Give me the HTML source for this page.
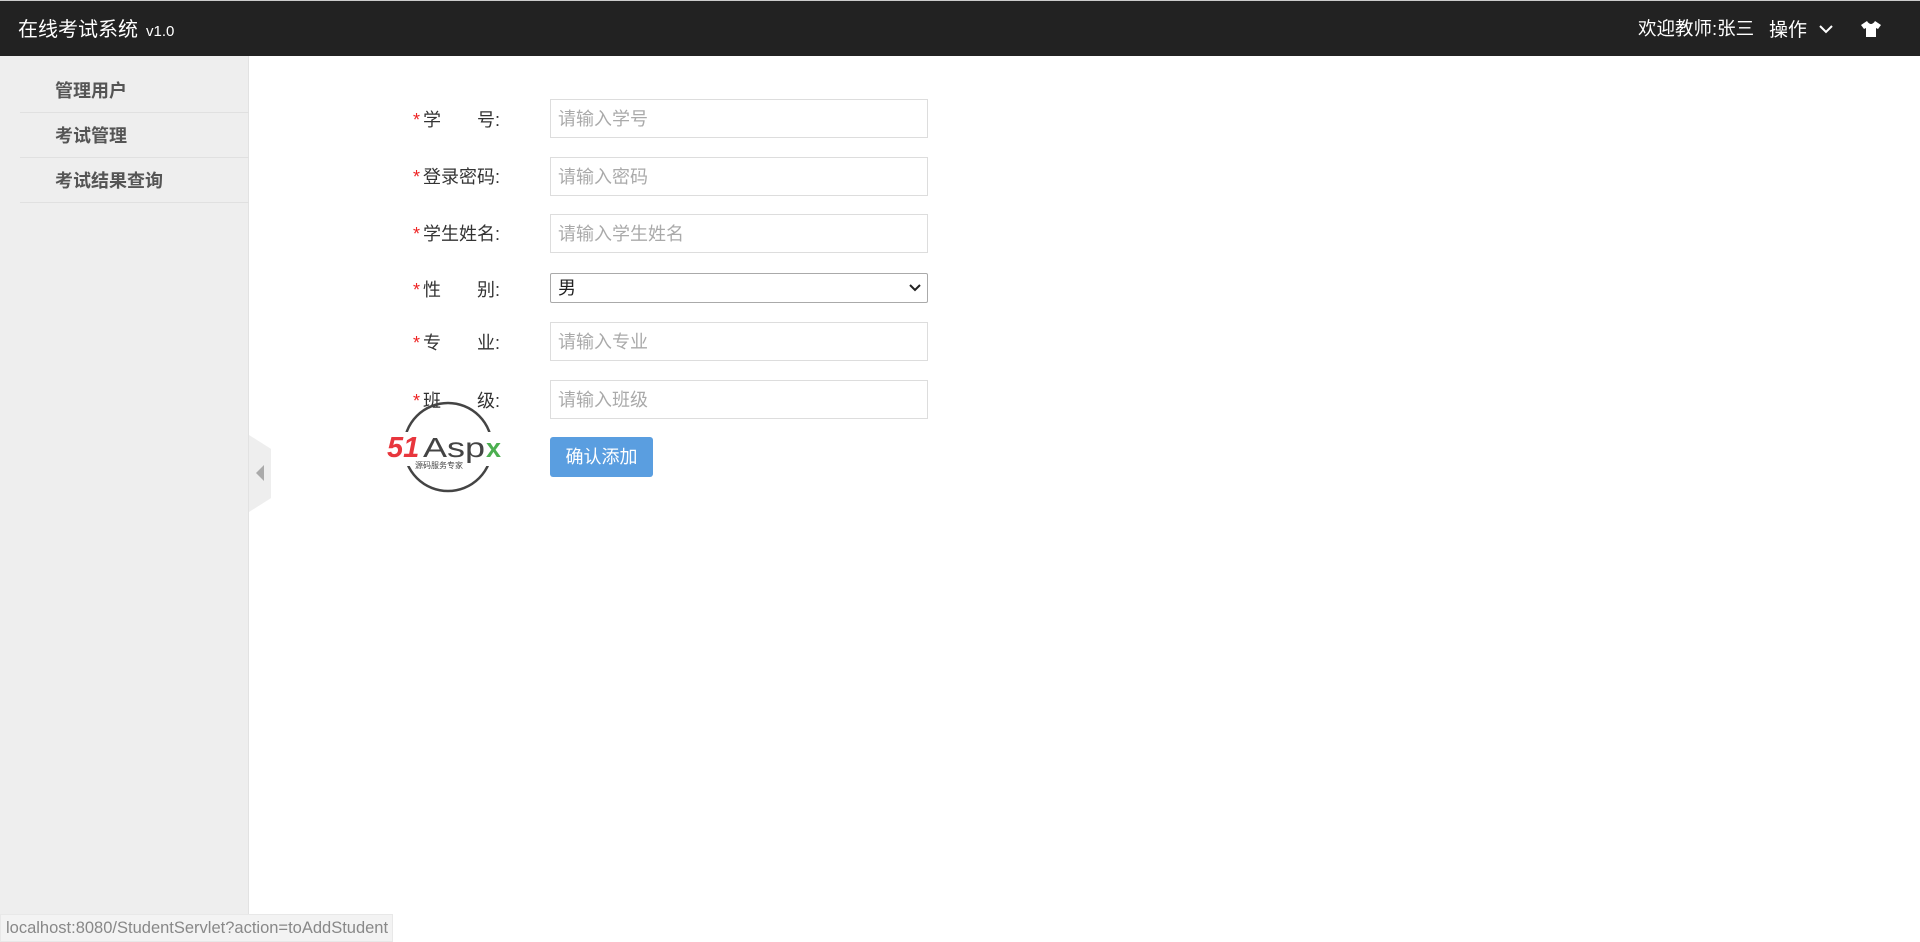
<!DOCTYPE html>
<html><head><meta charset="utf-8">
<style>
*{margin:0;padding:0;box-sizing:border-box}
body{width:1920px;height:942px;overflow:hidden;background:#fff;font-family:"Liberation Sans","Noto Sans CJK SC",sans-serif;position:relative}
.hdr{position:absolute;left:0;top:0;width:1920px;height:56px;background:#222;border-top:1px solid #ccc}
.hdr .t{position:absolute;left:18px;top:12px;color:#fff;font-size:20px}
.hdr .t small{font-size:15px;margin-left:8px}
.hdr .r{position:absolute;top:14px;color:#fff;font-size:19px}
.side{position:absolute;left:0;top:56px;width:249px;height:886px;background:#eee;border-right:1px solid #e2e2e2}
.mi{position:absolute;left:20px;width:229px;height:45px;border-bottom:1px solid #e0e0e0;font-weight:bold;color:#555;font-size:18px;padding-left:35px;line-height:47px}
.lbl{position:absolute;left:413px;font-size:18px;color:#333}
.lbl b{color:#e22;font-weight:normal;margin-right:3px}
.inp{position:absolute;left:550px;width:378px;height:39px;border:1px solid #ddd;color:#aaa;font-size:18px;line-height:39px;padding-left:7px}
.btn{position:absolute;left:550px;top:437px;width:103px;height:40px;background:#5a9ee0;border-radius:3px;color:#fff;font-size:18px;text-align:center;line-height:40px}
.status{position:absolute;left:0;top:914px;width:393px;height:28px;background:#f3f3f3;border:1px solid #e8e8e8;color:#888;font-size:16.5px;line-height:26px;padding-left:5px}
</style></head><body>
<div class="hdr">
<div class="t">在线考试系统<small>v1.0</small></div>
<div class="r" style="left:1638px;font-size:18.5px">欢迎教师:张三</div>
<div class="r" style="left:1769px">操作</div>
<svg style="position:absolute;left:1818px;top:22px" width="16" height="12" viewBox="0 0 16 12"><path d="M2 3l6 6 6-6" stroke="#fff" stroke-width="2" fill="none"/></svg>
<svg style="position:absolute;left:1860px;top:19px" width="22" height="18" viewBox="0 0 22 18"><path d="M7 1L1 5l3 4 2-1v9h10V8l2 1 3-4-6-4c-1 2-3 3-4 3S8 3 7 1z" fill="#fff"/></svg>
</div>
<div class="side">
<div class="mi" style="top:12px">管理用户</div>
<div class="mi" style="top:57px">考试管理</div>
<div class="mi" style="top:102px">考试结果查询</div>
</div>
<div style="position:absolute;left:249px;top:435px;width:22px;height:77px;background:#eee;clip-path:polygon(0 0,100% 18%,100% 82%,0 100%)"></div>
<div style="position:absolute;left:256px;top:465px;width:0;height:0;border-top:8px solid transparent;border-bottom:8px solid transparent;border-right:8px solid #aaa"></div>

<div class="lbl" style="top:106px"><b>*</b>学&emsp;&emsp;号:</div>
<div class="inp" style="top:99px">请输入学号</div>
<div class="lbl" style="top:163px"><b>*</b>登录密码:</div>
<div class="inp" style="top:157px">请输入密码</div>
<div class="lbl" style="top:220px"><b>*</b>学生姓名:</div>
<div class="inp" style="top:214px">请输入学生姓名</div>
<div class="lbl" style="top:276px"><b>*</b>性&emsp;&emsp;别:</div>
<div class="inp" style="top:273px;height:30px;line-height:28px;color:#222;border-color:#aaa;border-radius:2px">男
<svg style="position:absolute;right:6px;top:9px" width="12" height="10" viewBox="0 0 12 10"><path d="M1 2l5 5 5-5" stroke="#222" stroke-width="2" fill="none"/></svg></div>
<div class="lbl" style="top:329px"><b>*</b>专&emsp;&emsp;业:</div>
<div class="inp" style="top:322px">请输入专业</div>
<div class="lbl" style="top:387px"><b>*</b>班&emsp;&emsp;级:</div>
<div class="inp" style="top:380px">请输入班级</div>
<div class="btn">确认添加</div>

<svg style="position:absolute;left:385px;top:400px" width="130" height="95" viewBox="0 0 130 95">
<circle cx="63" cy="47" r="44" fill="none" stroke="#444" stroke-width="2.5"/>
<rect x="0" y="32" width="130" height="34" fill="#fff"/>
<text x="2" y="57" font-family="Liberation Sans" font-style="italic" font-weight="bold" font-size="29" fill="#e8363d">51</text>
<text x="38" y="57" font-family="Liberation Sans" font-size="28" fill="#444" textLength="62" lengthAdjust="spacingAndGlyphs">Asp</text>
<text x="101" y="57" font-family="Liberation Sans" font-weight="bold" font-size="27" fill="#4caf50">x</text>
<text x="30" y="68" font-family="Noto Sans CJK SC" font-size="8" fill="#444">源码服务专家</text>
</svg>

<div class="status">localhost:8080/StudentServlet?action=toAddStudent</div>
</body></html>
